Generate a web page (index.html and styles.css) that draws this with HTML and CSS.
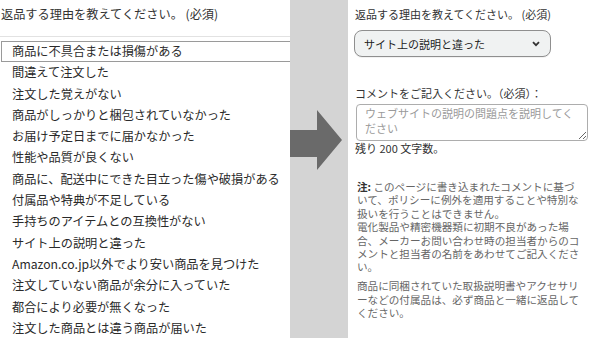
FILE: index.html
```html
<!DOCTYPE html>
<html lang="ja">
<head>
<meta charset="utf-8">
<link rel="stylesheet" href="styles.css">
</head>
<body>
<div class="page">
  <section class="left">
    <div class="left-title">返品する理由を教えてください。 (必須)</div>
    <ul class="options">
      <li class="option selected">商品に不具合または損傷がある</li>
      <li class="option">間違えて注文した</li>
      <li class="option">注文した覚えがない</li>
      <li class="option">商品がしっかりと梱包されていなかった</li>
      <li class="option">お届け予定日までに届かなかった</li>
      <li class="option">性能や品質が良くない</li>
      <li class="option">商品に、配送中にできた目立った傷や破損がある</li>
      <li class="option">付属品や特典が不足している</li>
      <li class="option">手持ちのアイテムとの互換性がない</li>
      <li class="option">サイト上の説明と違った</li>
      <li class="option">Amazon.co.jp以外でより安い商品を見つけた</li>
      <li class="option">注文していない商品が余分に入っていた</li>
      <li class="option">都合により必要が無くなった</li>
      <li class="option">注文した商品とは違う商品が届いた</li>
    </ul>
  </section>
  <div class="divider">
    <svg class="arrow" width="52" height="60" viewBox="0 0 52 60">
      <path d="M0 20 H27 V0 L52 30 L27 60 V47 H0 Z" fill="#6a6a6a"/>
    </svg>
  </div>
  <section class="right">
    <div class="r-title">返品する理由を教えてください。 (必須)</div>
    <div class="select">
      <span>サイト上の説明と違った</span>
      <svg class="chev" width="8" height="6" viewBox="0 0 8 6"><path d="M1 1.2 L4 4.2 L7 1.2" fill="none" stroke="#333" stroke-width="1.8"/></svg>
    </div>
    <div class="r-label">コメントをご記入ください。（必須）：</div>
    <textarea class="comment" placeholder="ウェブサイトの説明の問題点を説明してください"></textarea>
    <div class="counter">残り 200 文字数。</div>
    <p class="note"><b>注:</b> このページに書き込まれたコメントに基づいて、ポリシーに例外を適用することや特別な扱いを行うことはできません。<br>電化製品や精密機器類に初期不良があった場合、メーカーお問い合わせ時の担当者からのコメントと担当者の名前をあわせてご記入ください。</p>
    <p class="note note2">商品に同梱されていた取扱説明書やアクセサリーなどの付属品は、必ず商品と一緒に返品してください。</p>
  </section>
</div>
</body>
</html>
```

FILE: styles.css
```css
html, body {
  margin: 0;
  padding: 0;
  background: #fff;
}
body {
  font-family: "Noto Sans CJK JP", "Noto Sans", sans-serif;
  color: #333;
}
.page {
  display: flex;
  width: 600px;
  height: 338px;
  overflow: hidden;
}
.left {
  width: 290px;
  flex: none;
  overflow: hidden;
  background: #fff;
}
.left-title {
  font-size: 12.2px;
  line-height: 20px;
  margin-top: 4px;
  padding-left: 1px;
  color: #333;
  white-space: nowrap;
}
.options {
  list-style: none;
  margin: 12px 0 0 0;
  padding: 4px 0 0 0;
  width: 300px;
  border-top: 1px solid #e2e2e2;
  border-top-right-radius: 6px;
}
.option {
  font-size: 12.2px;
  line-height: 21.3px;
  height: 21.3px;
  padding-left: 12px;
  color: #2a2a2a;
  white-space: nowrap;
  box-sizing: border-box;
}
.option.selected {
  border: 1px solid #9a9a9a;
  margin-left: 1px;
  padding-left: 10px;
  line-height: 19px;
}
.divider {
  width: 58px;
  flex: none;
  background: #d4d4d4;
  padding-top: 110px;
  box-sizing: border-box;
}
.arrow {
  display: block;
}
.right {
  flex: 1;
  padding-left: 7px;
  font-size: 11px;
  color: #333;
}
.r-title {
  line-height: 16px;
  margin-top: 6px;
  white-space: nowrap;
}
.select {
  margin-top: 8px;
  margin-left: -1px;
  width: 197px;
  height: 27px;
  box-sizing: border-box;
  border: 1px solid #8f8f8f;
  border-radius: 8px;
  background: #f0f2f2;
  display: flex;
  align-items: center;
  justify-content: space-between;
  padding: 0 10px 0 9px;
  box-shadow: 0 1px 0 rgba(0,0,0,0.05);
}
.select span {
  line-height: 16px;
  color: #222;
}
.chev {
  display: block;
}
.r-label {
  margin-top: 28px;
  line-height: 16px;
  white-space: nowrap;
}
.comment {
  display: block;
  margin: 3px 0 0 1px;
  width: 232px;
  height: 37px;
  box-sizing: border-box;
  border: 1px solid #adadad;
  border-radius: 4px;
  padding: 1px 8px;
  font-family: "Noto Sans CJK JP", "Noto Sans", sans-serif;
  font-size: 11px;
  line-height: 15px;
  color: #333;
  resize: both;
  overflow: hidden;
}
.comment::placeholder {
  color: #9a9a9a;
}
.counter {
  line-height: 14px;
  white-space: nowrap;
}
.note {
  margin: 25px 0 0 2px;
  width: 226px;
  font-size: 10.6px;
  line-height: 13.4px;
  color: #666;
  word-break: break-all;
}
.note b {
  color: #333;
  font-weight: bold;
}
.note2 {
  margin-top: 5.6px;
}
```
